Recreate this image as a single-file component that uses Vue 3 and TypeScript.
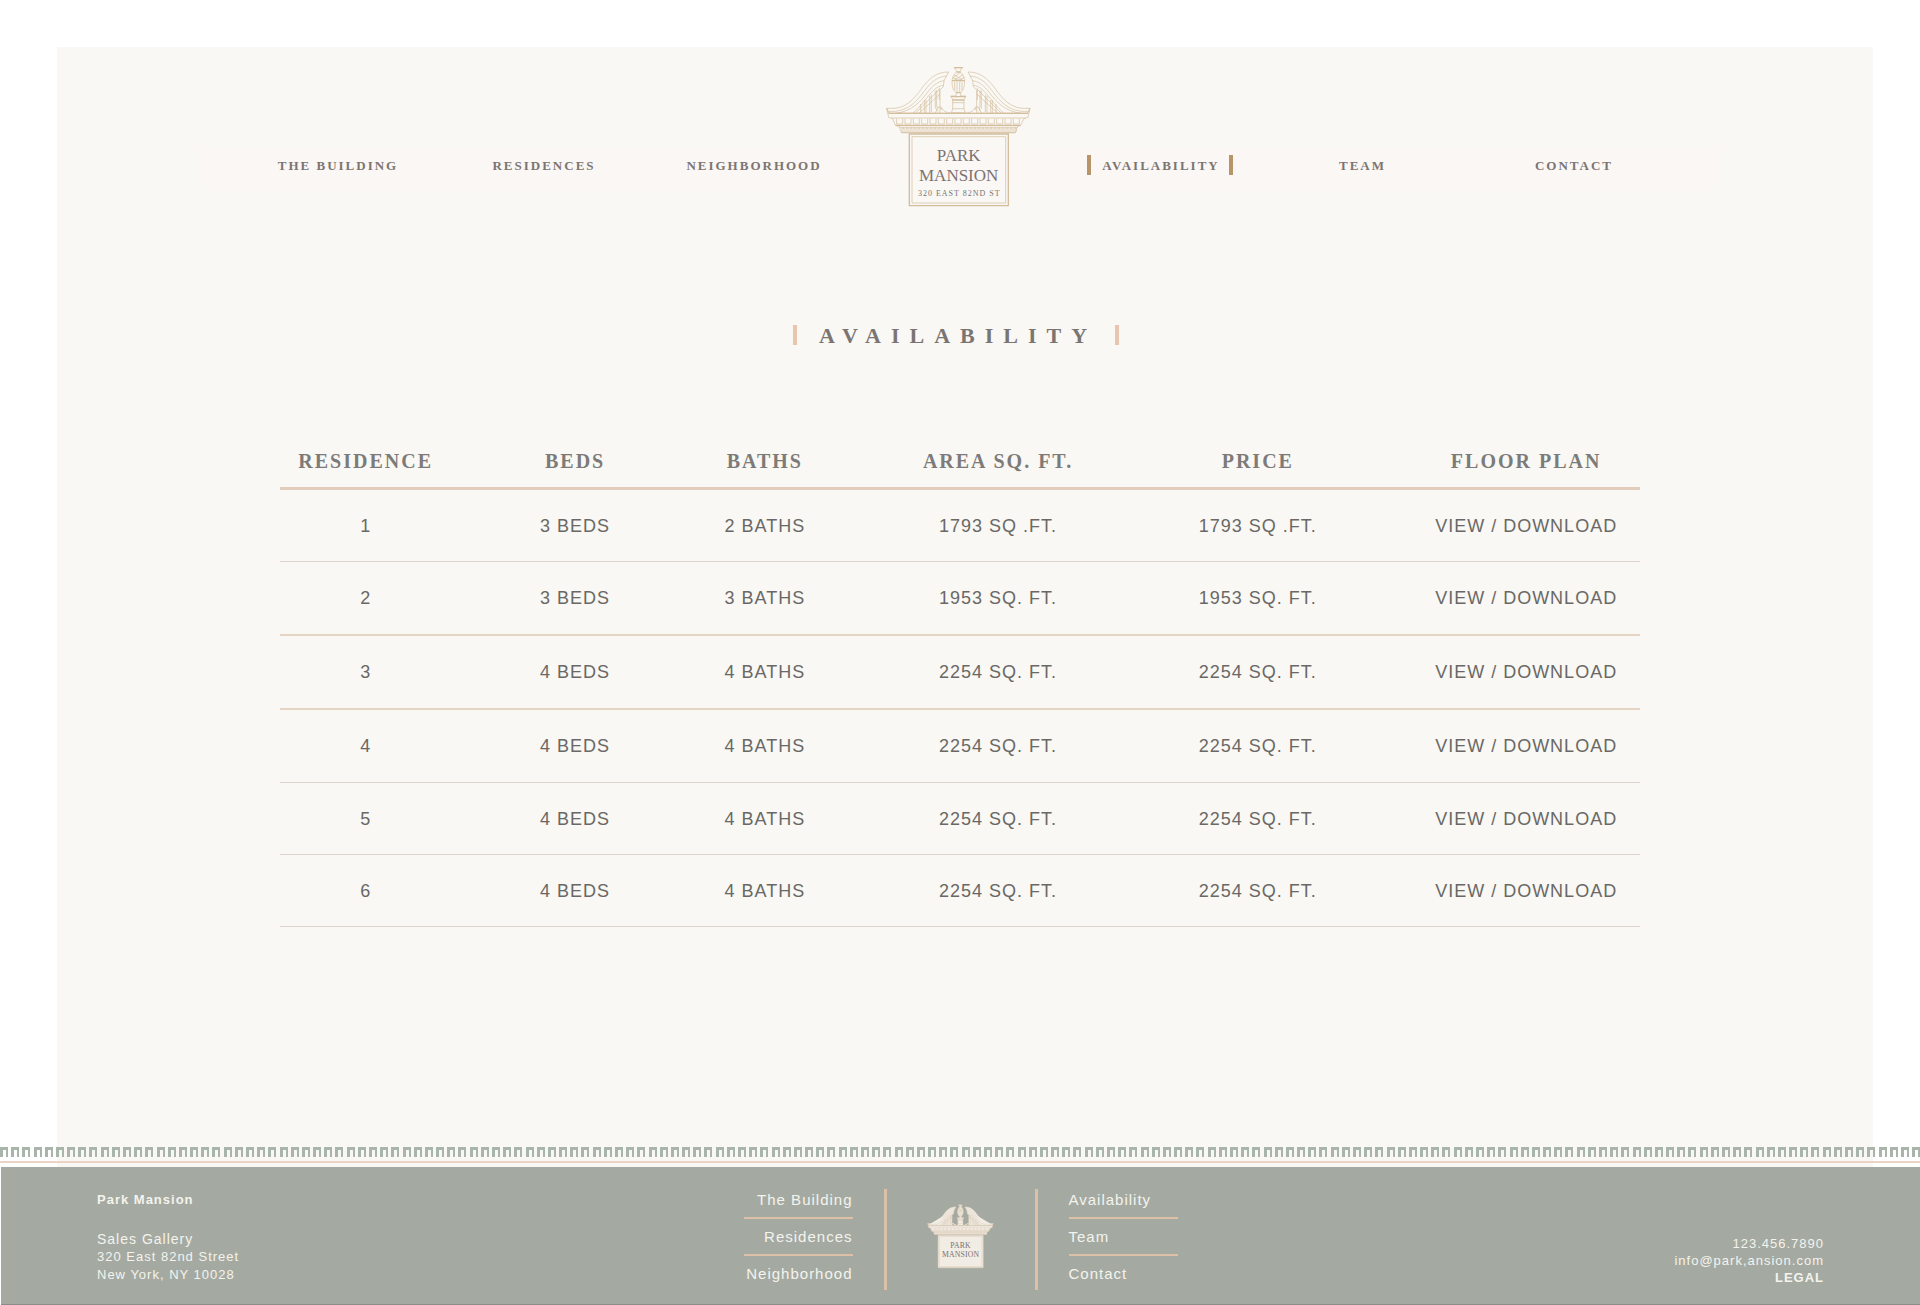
<script setup lang="ts">
interface NavItem {
  label: string
  href: string
  active?: boolean
}

interface Residence {
  id: number
  beds: string
  baths: string
  area: string
  price: string
}

const leftNav: NavItem[] = [
  { label: 'THE BUILDING', href: '#building' },
  { label: 'RESIDENCES', href: '#residences' },
  { label: 'NEIGHBORHOOD', href: '#neighborhood' },
]

const rightNav: NavItem[] = [
  { label: 'AVAILABILITY', href: '#availability', active: true },
  { label: 'TEAM', href: '#team' },
  { label: 'CONTACT', href: '#contact' },
]

const columns: string[] = ['RESIDENCE', 'BEDS', 'BATHS', 'AREA SQ. FT.', 'PRICE', 'FLOOR PLAN']

const residences: Residence[] = [
  { id: 1, beds: '3 BEDS', baths: '2 BATHS', area: '1793 SQ .FT.', price: '1793 SQ .FT.' },
  { id: 2, beds: '3 BEDS', baths: '3 BATHS', area: '1953 SQ. FT.', price: '1953 SQ. FT.' },
  { id: 3, beds: '4 BEDS', baths: '4 BATHS', area: '2254 SQ. FT.', price: '2254 SQ. FT.' },
  { id: 4, beds: '4 BEDS', baths: '4 BATHS', area: '2254 SQ. FT.', price: '2254 SQ. FT.' },
  { id: 5, beds: '4 BEDS', baths: '4 BATHS', area: '2254 SQ. FT.', price: '2254 SQ. FT.' },
  { id: 6, beds: '4 BEDS', baths: '4 BATHS', area: '2254 SQ. FT.', price: '2254 SQ. FT.' },
]

const footerLeft: NavItem[] = [
  { label: 'The Building', href: '#building' },
  { label: 'Residences', href: '#residences' },
  { label: 'Neighborhood', href: '#neighborhood' },
]

const footerRight: NavItem[] = [
  { label: 'Availability', href: '#availability' },
  { label: 'Team', href: '#team' },
  { label: 'Contact', href: '#contact' },
]

// Left edges of the eleven teeth in one repeat of the dentil border
const teeth: number[] = [0, 11, 22, 34, 45, 56, 67, 78, 89, 101, 112]

// Block courses of the cornice
const blocks: number[] = Array.from({ length: 15 }, (_, i) => 80 + i * 25)
const beads: number[] = Array.from({ length: 29 }, (_, i) => 96 + i * 12)
</script>

<template>
  <div class="page">
    <svg class="defs" width="0" height="0" aria-hidden="true">
      <defs>
        <g id="half-pediment">
          <path
            class="body"
            d="M50 175 H62 C105 178 132 148 156 114 C178 84 200 66 236 66 L222 92 L220 110 L210 120 L210 190 H58 Z"
          />
          <path d="M56 184 C112 188 140 154 164 122 C184 94 204 80 230 78" />
          <path d="M76 190 C126 184 150 156 172 128 C188 106 204 94 224 92" />
          <path d="M128 190 C150 172 166 148 182 130 C196 114 206 108 220 106" />
          <path d="M136 190 L208 118 M146 190 L210 132" />
          <path d="M152 162 V190 M163 150 V190 M168 150 V190 M179 138 V188 M184 134 V186 M196 122 V176 M200 120 V172 M208 114 V150" />
          <path d="M214 180 A7 7 0 1 0 204 184 M214 170 C218 182 226 188 246 190 M196 190 C200 180 202 174 208 170" />
        </g>
        <g id="crest">
          <use href="#half-pediment" />
          <use href="#half-pediment" transform="translate(530 0) scale(-1 1)" />
          <path class="body" d="M252 53 H278 L273 58 L270 66 C280 74 284 86 284 96 C284 112 278 122 272 128 L272 138 H288 L282 148 V178 L286 188 H244 L248 178 V148 L242 138 H258 L258 128 C250 122 246 112 246 96 C246 86 250 74 260 66 L257 58 Z" />
          <path class="strong" d="M252 53 H278 M260 66 H270 M243 140 H287 M247 150 H283 M246 92 H284 M258 128 H272" />
          <path d="M250 84 L272 66 M250 92 L280 74 M258 94 L284 82 M280 92 L252 74 M272 94 L248 82 M254 96 V120 M261 96 V126 M269 96 V126 M276 96 V120 M248 158 H282 M248 176 H282" />
          <path class="body" d="M50 175 L56 190 H474 L480 175 L474 202 L462 206 L452 226 L442 230 L436 248 H94 L88 230 L76 226 L68 206 L56 202 Z" />
          <path class="strong" d="M56 190 H474 M76 226 H452" />
          <path d="M64 204 H466 M88 232 H442 M94 248 H436" />
          <path v-for="x in blocks" :key="`b${x}`" d="M0 206 V222 H18 V206" :transform="`translate(${x} 0)`" />
          <path v-for="x in beads" :key="`d${x}`" d="M0 246 V234 H6 V246" :transform="`translate(${x} 0)`" />
          <path class="panel strong" d="M118 252 H415 V467 H118 Z" />
          <path d="M126 260 H407 V459 H126 Z" />
        </g>
      </defs>
    </svg>

    <div class="sheet">
      <header class="header">
        <nav class="nav" aria-label="Main">
          <a v-for="item in leftNav" :key="item.label" :href="item.href" class="nav-link">{{ item.label }}</a>
          <a href="#home" class="brand" aria-label="Park Mansion">
            <svg class="logo" viewBox="45 48 441 426">
              <use href="#crest" />
              <text class="name" x="266" y="334">PARK</text>
              <text class="name" x="266" y="393">MANSION</text>
              <text class="address" x="268" y="437">320 EAST 82ND ST</text>
            </svg>
          </a>
          <a
            v-for="item in rightNav"
            :key="item.label"
            :href="item.href"
            class="nav-link"
            :class="{ active: item.active }"
          >{{ item.label }}</a>
        </nav>
      </header>

      <main class="main">
        <div class="heading">
          <h1 class="title">AVAILABILITY</h1>
        </div>
        <table class="listing">
          <thead>
            <tr>
              <th v-for="column in columns" :key="column" scope="col">{{ column }}</th>
            </tr>
          </thead>
          <tbody>
            <tr v-for="row in residences" :key="row.id">
              <td>{{ row.id }}</td>
              <td>{{ row.beds }}</td>
              <td>{{ row.baths }}</td>
              <td>{{ row.area }}</td>
              <td>{{ row.price }}</td>
              <td><a :href="`#plan-${row.id}`">VIEW / DOWNLOAD</a></td>
            </tr>
          </tbody>
        </table>
      </main>
    </div>

    <div class="dentils" aria-hidden="true">
      <svg width="100%" height="10">
        <defs>
          <pattern id="dentil" width="123" height="10" patternUnits="userSpaceOnUse">
            <path v-for="x in teeth" :key="x" d="M0 0 H8 V10 H6 V3 H3 V10 H0 Z" :transform="`translate(${x} 0)`" />
          </pattern>
        </defs>
        <rect width="100%" height="10" fill="url(#dentil)" />
      </svg>
    </div>

    <footer class="footer">
      <address class="contact">
        <strong>Park Mansion</strong>
        <span class="gallery">Sales Gallery</span>
        <span>320 East 82nd Street</span>
        <span>New York, NY 10028</span>
      </address>

      <div class="footer-center">
        <ul class="links links-left">
          <li v-for="item in footerLeft" :key="item.label"><a :href="item.href">{{ item.label }}</a></li>
        </ul>
        <div class="emblem">
          <svg class="logo small" viewBox="45 48 441 426" role="img" aria-label="Park Mansion">
            <use href="#crest" />
            <text class="name" x="266" y="340">PARK</text>
            <text class="name" x="266" y="399">MANSION</text>
          </svg>
        </div>
        <ul class="links">
          <li v-for="item in footerRight" :key="item.label"><a :href="item.href">{{ item.label }}</a></li>
        </ul>
      </div>

      <div class="reach">
        <a href="tel:1234567890">123.456.7890</a>
        <a href="mailto:info@park,ansion.com">info@park,ansion.com</a>
        <a href="#legal" class="legal">LEGAL</a>
      </div>
    </footer>
  </div>
</template>

<style>
body {
  margin: 0;
  background: #ffffff;
}
</style>

<style scoped>
.page {
  font-family: "Liberation Sans", Arial, sans-serif;
  color: #6a6866;
  padding-top: 47px;
}

.defs {
  position: absolute;
}

a {
  color: inherit;
  text-decoration: none;
}

.sheet {
  margin: 0 47px 0 57px;
  padding-bottom: 240px;
  background: #f9f8f4;
}

.header {
  padding: 19px 153px 0 144px;
}

.nav {
  display: grid;
  grid-template-columns: 206fr 206fr 214fr 196fr 208fr 195fr 228fr;
  justify-items: center;
  align-items: start;
  padding: 0 33px;
  background: linear-gradient(#fbf7f5, #fbf7f5) 0 81px / 100% 38px no-repeat;
}

.nav-link {
  margin-top: 89px;
  padding: 1px 9px 0 11px;
  border: solid transparent;
  border-width: 0 4px;
  font: bold 13px/19px "Liberation Serif", "Times New Roman", serif;
  letter-spacing: 2px;
  color: #7b7572;
  white-space: nowrap;
}

.nav-link.active {
  border-color: #b8946a;
}

.brand {
  display: block;
}

.logo {
  display: block;
  width: 147px;
  height: 142px;
  fill: none;
  stroke: #d4bd9b;
  stroke-width: 2;
}

.logo .name,
.logo .address {
  font-family: "Liberation Serif", "Times New Roman", serif;
  text-anchor: middle;
  fill: #7b7370;
  stroke: none;
}

.logo .name {
  font-size: 51px;
}

.logo .address {
  font-size: 24px;
  letter-spacing: 3px;
}

.strong {
  stroke-width: 4;
}

.logo.small {
  width: 67px;
  height: 65px;
  fill: #f1ece4;
  stroke: #dccab6;
  stroke-width: 3;
}

.main {
  padding: 117px 233px 0 223px;
}

.heading {
  display: flex;
  justify-content: center;
  padding-right: 8px;
}

.title {
  margin: 0;
  padding: 1px 18px 0 22px;
  border: solid #e8c5ae;
  border-width: 0 4px;
  font: bold 22px/19px "Liberation Serif", "Times New Roman", serif;
  letter-spacing: 10px;
  color: #7b7572;
}

.listing {
  width: 100%;
  margin-top: 89px;
  border-collapse: collapse;
  table-layout: fixed;
}

.listing th {
  height: 53px;
  padding: 0;
  border-bottom: 3px solid #e2ccbb;
  font: bold 20px/24px "Liberation Serif", "Times New Roman", serif;
  letter-spacing: 2px;
  color: #7d7b79;
  white-space: nowrap;
}

.listing td {
  height: 71px;
  padding: 0;
  border-bottom: 1px solid #dfd5cc;
  font-size: 18px;
  line-height: 24px;
  letter-spacing: 1px;
  text-align: center;
  white-space: nowrap;
}

.listing tr:nth-child(2) td,
.listing tr:nth-child(3) td {
  height: 72px;
  border-bottom: 2px solid #e5d5c5;
}

.listing tr:nth-child(4) td {
  height: 72px;
}

.listing th:nth-child(1) { width: 12.6%; }
.listing th:nth-child(2) { width: 18.2%; }
.listing th:nth-child(3) { width: 9.7%; }
.listing th:nth-child(4) { width: 24.6%; }
.listing th:nth-child(5) { width: 13.6%; }

.listing th:last-child,
.listing td:last-child {
  padding-left: 62px;
}

.dentils {
  height: 14px;
  margin-top: -20px;
  border-bottom: 2px solid #ecd3c4;
}

.dentils svg {
  display: block;
}

.dentils path {
  fill: #a9b4aa;
}

.footer {
  display: grid;
  grid-template-columns: 1fr auto 1fr;
  margin: 4px 0 0 1px;
  padding: 15px 96px 13px;
  border-bottom: 1px solid #8b8d89;
  background: #a4aaa1;
  color: #f4f3ee;
  font-size: 13px;
  line-height: 18px;
  letter-spacing: 1px;
}

.contact {
  display: flex;
  flex-direction: column;
  padding-top: 9px;
  font-style: normal;
}

.gallery {
  margin-top: 21px;
  font-size: 14px;
}

.footer-center {
  display: flex;
  align-items: flex-start;
}

.links {
  width: 109px;
  margin: 0;
  padding: 0;
  list-style: none;
  font-size: 15px;
}

.links li {
  height: 35px;
  border-bottom: 2px solid #dcc0a8;
  line-height: 36px;
}

.links li:last-child {
  border-bottom: 0;
}

.links-left {
  text-align: right;
}

.emblem {
  display: flex;
  align-items: center;
  justify-content: center;
  width: 148px;
  height: 94px;
  margin: 7px 31px 0;
  padding-bottom: 7px;
  border: solid #dcc0a8;
  border-width: 0 3px;
}

.reach {
  display: flex;
  flex-direction: column;
  align-items: flex-end;
  padding-top: 53px;
  line-height: 17px;
}

.legal {
  font-weight: bold;
}
</style>
